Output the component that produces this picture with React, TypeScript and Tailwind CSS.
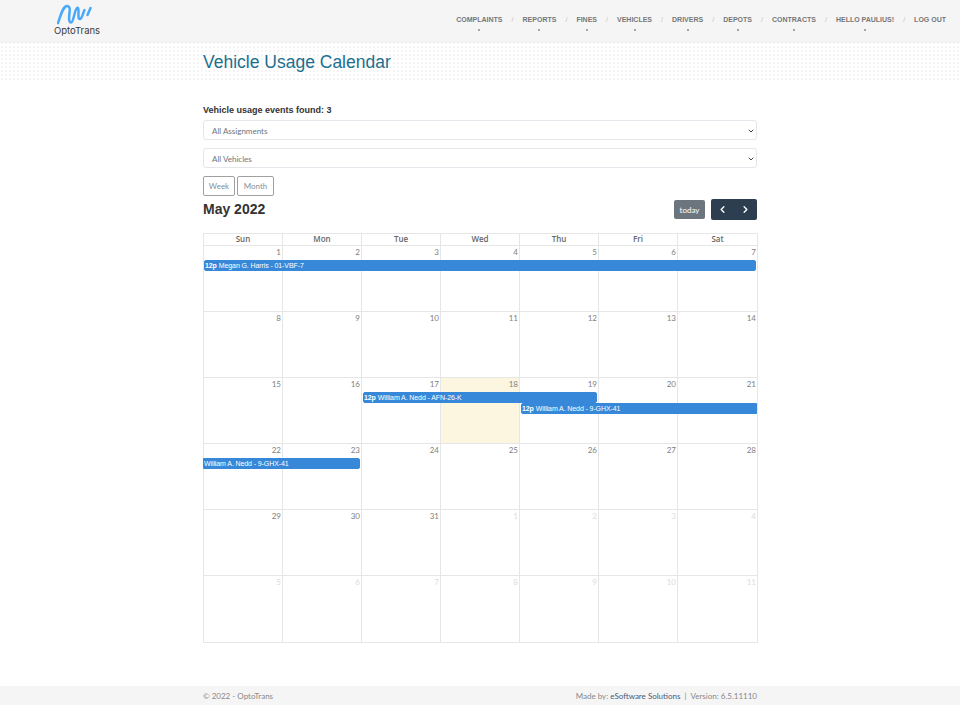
import React from 'react';
import { ChevronDown, ChevronLeft, ChevronRight } from 'lucide-react';

const navItems = [
  { label: 'COMPLAINTS', caret: true },
  { label: 'REPORTS', caret: true },
  { label: 'FINES', caret: true },
  { label: 'VEHICLES', caret: true },
  { label: 'DRIVERS', caret: true },
  { label: 'DEPOTS', caret: true },
  { label: 'CONTRACTS', caret: true },
  { label: 'HELLO PAULIUS!', caret: true },
  { label: 'LOG OUT', caret: false },
];

const dayNames = ['Sun', 'Mon', 'Tue', 'Wed', 'Thu', 'Fri', 'Sat'];

interface CalEvent {
  start: number;
  span: number;
  row: number;
  time?: string;
  title: string;
  className: string;
}

interface Week {
  days: { n: number; muted?: boolean; today?: boolean }[];
  heightClass: string;
  events: CalEvent[];
}

const days = (from: number, to: number) => {
  const out: { n: number; muted?: boolean; today?: boolean }[] = [];
  for (let n = from; n <= to; n++) out.push({ n });
  return out;
};

const weeks: Week[] = [
  {
    days: days(1, 7),
    heightClass: 'h-[66px]',
    events: [{ start: 1, span: 7, row: 1, time: '12p', title: 'Megan G. Harris - 01-VBF-7', className: 'ml-px mr-[2px] rounded-[2px]' }],
  },
  { days: days(8, 14), heightClass: 'h-[66px]', events: [] },
  {
    days: days(15, 21).map((d) => (d.n === 18 ? { ...d, today: true } : d)),
    heightClass: 'h-[66px]',
    events: [
      { start: 3, span: 3, row: 1, time: '12p', title: 'William A. Nedd - AFN-26-K', className: 'ml-[2px] mr-px rounded-[2px]' },
      { start: 5, span: 3, row: 2, time: '12p', title: 'William A. Nedd - 9-GHX-41', className: 'ml-[2px] mr-px rounded-l-[2px]' },
    ],
  },
  {
    days: days(22, 28),
    heightClass: 'h-[66px]',
    events: [{ start: 1, span: 2, row: 1, title: 'William A. Nedd - 9-GHX-41', className: 'mr-px rounded-r-[2px]' }],
  },
  {
    days: [...days(29, 31), ...days(1, 4).map((d) => ({ ...d, muted: true }))],
    heightClass: 'h-[66px]',
    events: [],
  },
  { days: days(5, 11).map((d) => ({ ...d, muted: true })), heightClass: 'h-[67px]', events: [] },
];

const Logo = () => (
  <div className="flex flex-col items-center">
    <svg className="w-[40px] h-[24px]" viewBox="0 0 40 24" fill="none" stroke="#4aa8fb" strokeWidth="2.5" strokeLinecap="round" strokeLinejoin="round">
      <path d="M1 21 C4 12 6 5 9.5 4 C13 3.5 13 7 12.5 11 C12 15 11.5 20.5 14 20.5 C16.5 20.5 17 11 19 7.5 C20.5 5 21.5 5 21.5 9 C21.5 13 21 17.5 23 17 C25 16.5 26 11 27.5 8" />
      <path d="M30.5 13 L33.5 6" />
    </svg>
    <span className="text-[9.5px] leading-[10px] text-[#3a3a3a] font-['Inter',sans-serif]">OptoTrans</span>
  </div>
);

const Header = () => (
  <header className="h-[41px] bg-[#f5f5f5] flex items-start shadow-[0_1px_2px_rgba(0,0,0,0.08)] relative">
    <div className="ml-[54px] mt-[2px] w-[46px] flex justify-center">
      <Logo />
    </div>
    <nav className="ml-auto mr-[14px] mt-[15px] flex items-start font-['Liberation_Sans',sans-serif] text-[7px] font-bold text-[#777777]">
      {navItems.map((item, i) => (
        <React.Fragment key={item.label}>
          {i > 0 && <span className="w-[20px] text-center font-normal leading-[10px] text-[#c4c4c4]">/</span>}
          <div className="flex flex-col items-center">
            <span className="leading-[10px] whitespace-nowrap">{item.label}</span>
            {item.caret && <span className="mt-[4px] w-[2px] h-[2px] rounded-full bg-[#888]" />}
          </div>
        </React.Fragment>
      ))}
    </nav>
  </header>
);

const SelectBox = ({ label }: { label: string }) => (
  <div className="h-[20px] border border-[#e3e7eb] rounded-[3px] bg-white flex items-center justify-between pl-[8px] pr-[1px] pt-px text-[8px] text-[#6c757d]">
    <span>{label}</span>
    <ChevronDown className="w-[8px] h-[8px] text-[#444]" strokeWidth={3} />
  </div>
);

const WeekRow = ({ week }: { week: Week }) => (
  <div className={`relative ${week.heightClass}`}>
    <div className="absolute inset-0 grid grid-cols-[repeat(6,79px)_81px]">
      {week.days.map((d, i) => (
        <div
          key={i}
          className={`border-b border-l border-[#e6e6e6] ${i === 6 ? 'border-r' : ''} ${d.today ? 'bg-[#fcf6e0]' : ''}`}
        />
      ))}
    </div>
    <div className="relative">
      <div className="grid grid-cols-[repeat(6,79px)_81px] h-[14px]">
        {week.days.map((d, i) => (
          <div key={i} className={`text-right ${i === 6 ? 'pr-[2px]' : 'pr-px'} pt-px text-[8px] leading-[11px] ${d.muted ? 'text-[#dcdcdc]' : 'text-[#808080]'}`}>
            {d.n}
          </div>
        ))}
      </div>
      <div className="grid grid-cols-[repeat(6,79px)_81px]">
        {week.events.map((e) => (
          <div
            key={e.title + e.start}
            style={{ gridColumn: `${e.start} / span ${e.span}`, gridRow: e.row }}
            className={`h-[11px] bg-[#3788d8] border border-[#3788d8] text-white text-[7px] leading-[9px] tracking-[-0.1px] whitespace-nowrap overflow-hidden font-['Liberation_Sans',sans-serif] ${e.className}`}
          >
            {e.time && <b className="mr-[2px]">{e.time}</b>}
            {e.title}
          </div>
        ))}
      </div>
    </div>
  </div>
);

export default function App() {
  return (
    <div className="h-[705px] bg-white flex flex-col font-['Lato',sans-serif] overflow-hidden">
      <Header />
      <div className="h-[39px] bg-[radial-gradient(#f5f5f5_1px,transparent_1px)] bg-size-[4px_4px]">
        <div className="w-[554px] mx-auto">
          <h1 className="text-[17.5px] leading-[43px] text-[#1d6f8f] font-['Liberation_Sans',sans-serif]">Vehicle Usage Calendar</h1>
        </div>
      </div>
      <main className="w-[554px] mx-auto flex-1 pt-[24px]">
        <p className="text-[9px] leading-[13px] font-bold text-[#333] font-['Liberation_Sans',sans-serif]">Vehicle usage events found: 3</p>
        <div className="mt-[3px] flex flex-col gap-[8px]">
          <SelectBox label="All Assignments" />
          <SelectBox label="All Vehicles" />
        </div>
        <div className="mt-[8px] flex gap-[2px] text-[8px] text-[#868e96]">
          <button className="h-[20px] w-[32px] border border-[#a0a0a0] rounded-[2px]">Week</button>
          <button className="h-[20px] w-[37px] border border-[#a0a0a0] rounded-[2px]">Month</button>
        </div>
        <div className="mt-[3px] flex items-center justify-between h-[21px]">
          <h2 className="text-[14px] font-bold text-[#333] font-['Liberation_Sans',sans-serif]">May 2022</h2>
          <div className="flex items-center gap-[6px]">
            <button className="h-[19px] w-[31px] rounded-[2px] bg-[#6c757d] text-white text-[8px]">today</button>
            <div className="h-[21px] w-[46px] rounded-[2px] bg-[#2c3e50] flex items-center justify-around text-white">
              <ChevronLeft className="w-[11px] h-[11px]" strokeWidth={3} />
              <ChevronRight className="w-[11px] h-[11px]" strokeWidth={3} />
            </div>
          </div>
        </div>
        <div className="mt-[13px] w-[555px]">
          <div className="grid grid-cols-[repeat(6,79px)_81px] h-[13px] border-t border-[#e6e6e6]">
            {dayNames.map((d, i) => (
              <div
                key={d}
                className={`border-b border-l border-[#e6e6e6] ${i === 6 ? 'border-r' : ''} text-center text-[8px] leading-[10px] font-semibold text-[#666] font-['Open_Sans',sans-serif]`}
              >
                {d}
              </div>
            ))}
          </div>
          {weeks.map((w, i) => (
            <WeekRow key={i} week={w} />
          ))}
        </div>
      </main>
      <footer className="h-[19px] bg-[#f5f5f5] text-[8px] text-[#888]">
        <div className="w-[554px] mx-auto h-full flex items-center justify-between pt-[1px]">
          <span>© 2022 - OptoTrans</span>
          <span>
            Made by: <span className="text-[#4a5a7a]">eSoftware Solutions</span> &nbsp;|&nbsp; Version: 6.5.11110
          </span>
        </div>
      </footer>
    </div>
  );
}
